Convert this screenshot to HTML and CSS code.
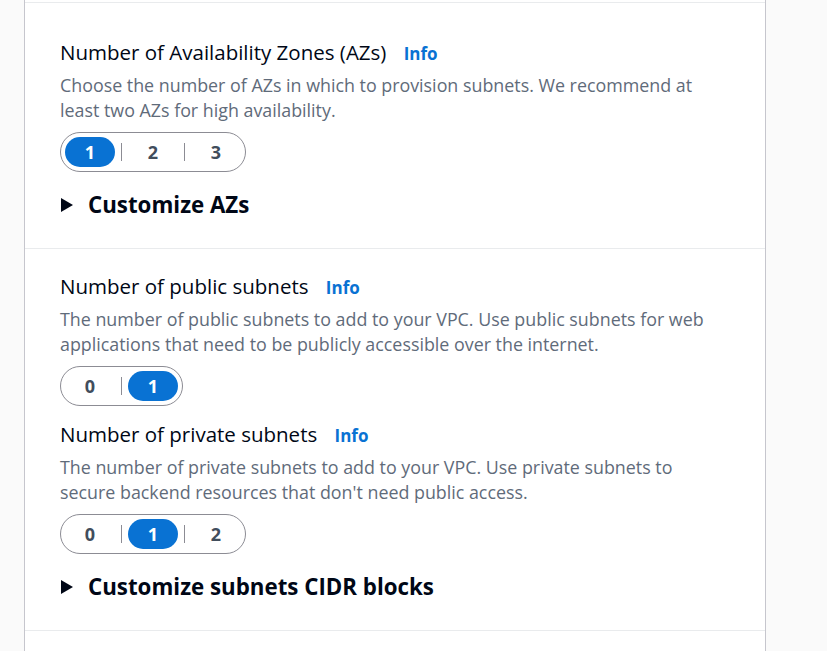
FILE: index.html
```
<!DOCTYPE html>
<html lang="en">
<head>
<meta charset="utf-8">
<title>VPC settings</title>
<link rel="stylesheet" href="styles.css">
</head>
<body>
<div class="card">
  <section class="section first">
    <div class="label">Number of Availability Zones (AZs) <a class="info" href="#">Info</a></div>
    <p class="desc">Choose the number of AZs in which to provision subnets. We recommend at least two AZs for high availability.</p>
    <div class="seg">
      <button class="opt on">1</button><span class="sep"></span><button class="opt">2</button><span class="sep"></span><button class="opt">3</button>
    </div>
    <div class="expander"><span class="caret"></span>Customize AZs</div>
  </section>
  <section class="section second">
    <div class="label">Number of public subnets <a class="info" href="#">Info</a></div>
    <p class="desc">The number of public subnets to add to your VPC. Use public subnets for web applications that need to be publicly accessible over the internet.</p>
    <div class="seg">
      <button class="opt">0</button><span class="sep"></span><button class="opt on">1</button>
    </div>
    <div class="label label-next">Number of private subnets <a class="info" href="#">Info</a></div>
    <p class="desc">The number of private subnets to add to your VPC. Use private subnets to secure backend resources that don't need public access.</p>
    <div class="seg">
      <button class="opt">0</button><span class="sep"></span><button class="opt on">1</button><span class="sep"></span><button class="opt">2</button>
    </div>
    <div class="expander"><span class="caret"></span>Customize subnets CIDR blocks</div>
  </section>
</div>
</body>
</html>
```
FILE: styles.css
```
html, body {
  margin: 0;
  padding: 0;
}
body {
  background: #fafafa;
  font-family: "Open Sans", "Noto Sans", sans-serif;
  color: #000716;
  height: 651px;
  overflow: hidden;
}
.card {
  margin-left: 24px;
  width: 740px;
  min-height: 651px;
  background: #ffffff;
  border-left: 1px solid #c6c6cd;
  border-right: 1px solid #c6c6cd;
  padding-top: 2px;
}
.section {
  border-top: 1px solid #e9ebed;
  padding: 0 35px;
}
.section.first {
  padding-top: 37px;
  padding-bottom: 29px;
}
.section.second {
  padding-top: 25px;
  padding-bottom: 29px;
  border-bottom: 1px solid #e9ebed;
}
.label {
  font-size: 20.5px;
  line-height: 24px;
  color: #000716;
}
.label-next {
  margin-top: 16px;
}
.info {
  font-size: 17px;
  font-weight: 700;
  color: #0972d3;
  text-decoration: none;
  margin-left: 12px;
}
.desc {
  margin: 7px 0 0;
  font-size: 17.85px;
  line-height: 25px;
  color: #5f6b7a;
}
.seg {
  margin-top: 9px;
  display: inline-flex;
  align-items: center;
  padding: 4px;
  border: 1px solid #8c8c94;
  border-radius: 20px;
  height: 30px;
}
.opt {
  width: 50px;
  height: 30px;
  border: 0;
  border-radius: 15px;
  background: transparent;
  font-family: inherit;
  font-size: 18px;
  font-weight: 700;
  color: #414d5c;
  padding: 0;
}
.opt.on {
  background: #0972d3;
  color: #ffffff;
}
.sep {
  width: 1px;
  height: 18px;
  background: #8c8c94;
  margin: 0 6px;
}
.expander {
  display: flex;
  align-items: center;
  margin-top: 19px;
  font-size: 22.3px;
  line-height: 28px;
  font-weight: 700;
  color: #000716;
}
.caret {
  width: 0;
  height: 0;
  border-top: 7px solid transparent;
  border-bottom: 7px solid transparent;
  border-left: 12px solid #000716;
  margin: 0 15px 0 1px;
}
```
